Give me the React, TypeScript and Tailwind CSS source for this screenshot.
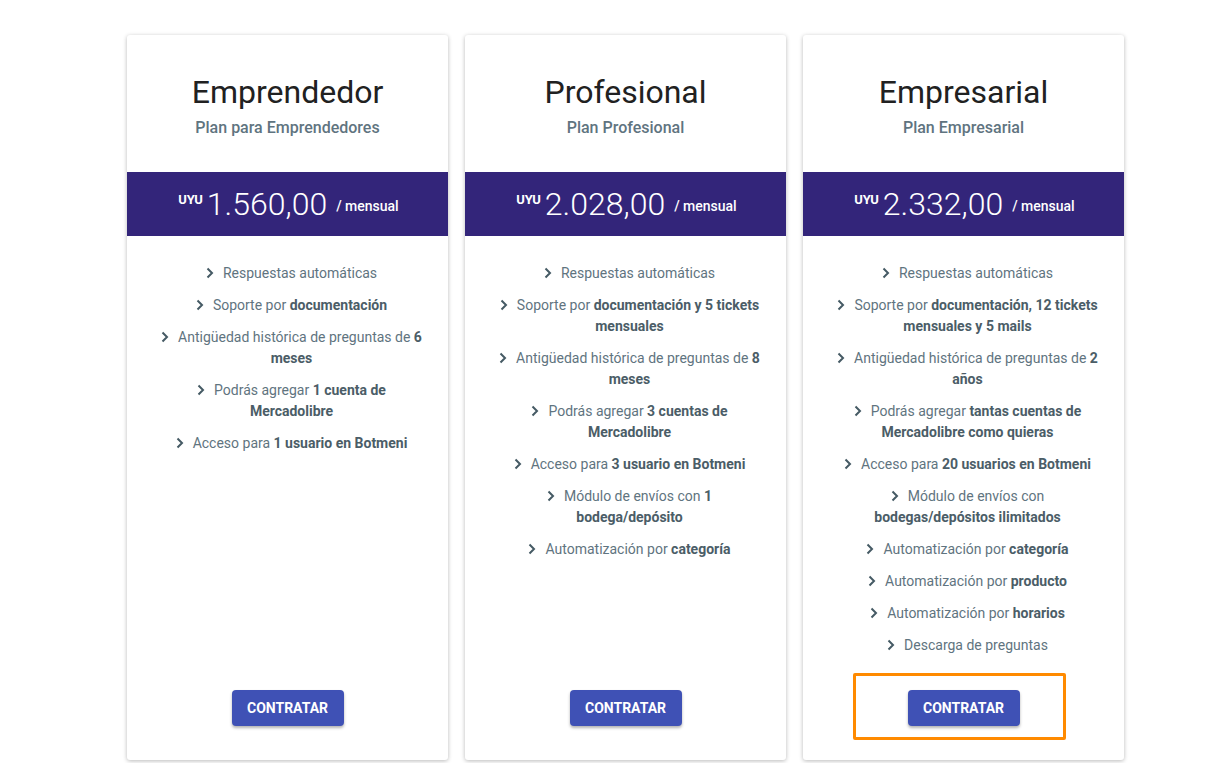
import React from 'react';

type Feature = React.ReactNode;

type Plan = {
  name: string;
  subtitle: string;
  price: string;
  features: Feature[];
  highlight?: boolean;
};

const plans: Plan[] = [
  {
    name: 'Emprendedor',
    subtitle: 'Plan para Emprendedores',
    price: '1.560,00',
    features: [
      <>Respuestas automáticas</>,
      <>Soporte por <b>documentación</b></>,
      <>Antigüedad histórica de preguntas de <b>6 meses</b></>,
      <>Podrás agregar <b>1 cuenta de Mercadolibre</b></>,
      <>Acceso para <b>1 usuario en Botmeni</b></>,
    ],
  },
  {
    name: 'Profesional',
    subtitle: 'Plan Profesional',
    price: '2.028,00',
    features: [
      <>Respuestas automáticas</>,
      <>Soporte por <b>documentación y 5 tickets mensuales</b></>,
      <>Antigüedad histórica de preguntas de <b>8 meses</b></>,
      <>Podrás agregar <b>3 cuentas de Mercadolibre</b></>,
      <>Acceso para <b>3 usuario en Botmeni</b></>,
      <>Módulo de envíos con <b>1 bodega/depósito</b></>,
      <>Automatización por <b>categoría</b></>,
    ],
  },
  {
    name: 'Empresarial',
    subtitle: 'Plan Empresarial',
    price: '2.332,00',
    highlight: true,
    features: [
      <>Respuestas automáticas</>,
      <>Soporte por <b>documentación, 12 tickets mensuales y 5 mails</b></>,
      <>Antigüedad histórica de preguntas de <b>2 años</b></>,
      <>Podrás agregar <b>tantas cuentas de Mercadolibre como quieras</b></>,
      <>Acceso para <b>20 usuarios en Botmeni</b></>,
      <>Módulo de envíos con <b>bodegas/depósitos ilimitados</b></>,
      <>Automatización por <b>categoría</b></>,
      <>Automatización por <b>producto</b></>,
      <>Automatización por <b>horarios</b></>,
      <>Descarga de preguntas</>,
    ],
  },
];

function Chevron() {
  return (
    <svg
      width="8"
      height="12"
      viewBox="0 0 8 12"
      className="inline-block align-[-1px] mr-[9px]"
      fill="none"
      stroke="#455a64"
      strokeWidth="2"
    >
      <path d="M1.5 1.5 L6 6 L1.5 10.5" />
    </svg>
  );
}

function PlanCard({ plan }: { plan: Plan }) {
  return (
    <div className="flex flex-col bg-white rounded-[3px] shadow-[0_1px_4px_rgba(0,0,0,0.28)]">
      {/* Header */}
      <div className="pt-[37px] pb-[34px] text-center">
        <h2 className="text-[32px] leading-[40px] text-[#212121] font-normal">{plan.name}</h2>
        <p className="mt-[6px] text-[16px] leading-[20px] text-[#5f7480] font-medium">{plan.subtitle}</p>
      </div>

      {/* Price band */}
      <div className="h-[64px] bg-[#33257a] text-white flex items-center justify-center pl-[2px]">
        <span className="text-[13px] font-bold self-start mt-[18px] mr-[4px]">UYU</span>
        <span className="text-[32px] font-light leading-none">{plan.price}</span>
        <span className="text-[14px] font-medium ml-[9px] mt-[4px]">/ mensual</span>
      </div>

      {/* Features */}
      <ul className="pt-[27px] pl-[34px] pr-[26px] flex flex-col gap-[11px] text-center text-[14px] leading-[21px] text-[#5f7480]">
        {plan.features.map((f, i) => (
          <li key={i} className="[&_b]:font-bold [&_b]:text-[#4b5d67]">
            <Chevron />
            {f}
          </li>
        ))}
      </ul>

      {/* Action */}
      <div className="mt-auto pb-[20px] flex justify-center">
        <div
          className={
            'border-[3px] rounded-[2px] w-[213px] h-[67px] ml-[-8px] pl-[8px] pt-[3px] flex items-center justify-center ' +
            (plan.highlight ? 'border-[#ff8a00]' : 'border-transparent')
          }
        >
          <button className="w-[112px] h-[36px] rounded-[4px] bg-[#3f51b5] text-white text-[14px] font-bold uppercase shadow-[0_2px_3px_rgba(0,0,0,0.3)]">
            Contratar
          </button>
        </div>
      </div>
    </div>
  );
}

export default function App() {
  return (
    <div
      className="h-[763px] bg-white pt-[35px] pl-[127px] pr-[99px]"
      style={{ fontFamily: 'Roboto, "Noto Sans", sans-serif' }}
    >
      <div className="grid grid-cols-3 gap-[17px] h-[725px]">
        {plans.map((p) => (
          <PlanCard key={p.name} plan={p} />
        ))}
      </div>
    </div>
  );
}
